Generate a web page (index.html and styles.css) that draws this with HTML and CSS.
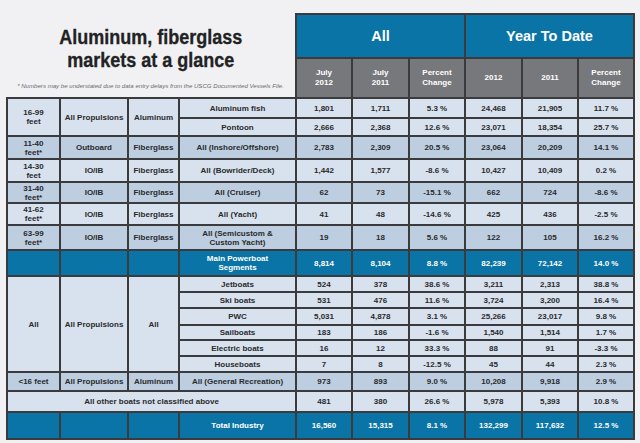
FILE: index.html
```html
<!DOCTYPE html>
<html>
<head>
<meta charset="utf-8">
<link rel="stylesheet" href="styles.css">
</head>
<body>
<div class="grid">
  <div class="title">
    <div class="title-text">Aluminum, fiberglass<br>markets at a glance</div>
    <div class="note">* Numbers may be understated due to data entry delays from the USCG Documented Vessels File.</div>
  </div>
  <div class="c bl hd s3">All</div>
  <div class="c bl hd s3">Year To Date</div>
  <div class="c gr">July<br>2012</div>
  <div class="c gr">July<br>2011</div>
  <div class="c gr">Percent<br>Change</div>
  <div class="c gr">2012</div>
  <div class="c gr">2011</div>
  <div class="c gr">Percent<br>Change</div>

  <div class="c lt r2">16-99<br>feet</div>
  <div class="c lt r2">All Propulsions</div>
  <div class="c lt r2">Aluminum</div>
  <div class="c lt">Aluminum fish</div>
  <div class="c lt">1,801</div><div class="c lt">1,711</div><div class="c lt">5.3 %</div><div class="c lt">24,468</div><div class="c lt">21,905</div><div class="c lt">11.7 %</div>
  <div class="c lt">Pontoon</div>
  <div class="c lt">2,666</div><div class="c lt">2,368</div><div class="c lt">12.6 %</div><div class="c lt">23,071</div><div class="c lt">18,354</div><div class="c lt">25.7 %</div>

  <div class="c dk">11-40<br>feet*</div><div class="c dk">Outboard</div><div class="c dk">Fiberglass</div><div class="c dk">All (Inshore/Offshore)</div>
  <div class="c dk">2,783</div><div class="c dk">2,309</div><div class="c dk">20.5 %</div><div class="c dk">23,064</div><div class="c dk">20,209</div><div class="c dk">14.1 %</div>

  <div class="c lt">14-30<br>feet</div><div class="c lt">IO/IB</div><div class="c lt">Fiberglass</div><div class="c lt">All (Bowrider/Deck)</div>
  <div class="c lt">1,442</div><div class="c lt">1,577</div><div class="c lt">-8.6 %</div><div class="c lt">10,427</div><div class="c lt">10,409</div><div class="c lt">0.2 %</div>

  <div class="c dk">31-40<br>feet*</div><div class="c dk">IO/IB</div><div class="c dk">Fiberglass</div><div class="c dk">All (Cruiser)</div>
  <div class="c dk">62</div><div class="c dk">73</div><div class="c dk">-15.1 %</div><div class="c dk">662</div><div class="c dk">724</div><div class="c dk">-8.6 %</div>

  <div class="c lt">41-62<br>feet*</div><div class="c lt">IO/IB</div><div class="c lt">Fiberglass</div><div class="c lt">All (Yacht)</div>
  <div class="c lt">41</div><div class="c lt">48</div><div class="c lt">-14.6 %</div><div class="c lt">425</div><div class="c lt">436</div><div class="c lt">-2.5 %</div>

  <div class="c dk">63-99<br>feet*</div><div class="c dk">IO/IB</div><div class="c dk">Fiberglass</div><div class="c dk">All (Semicustom &amp;<br>Custom Yacht)</div>
  <div class="c dk">19</div><div class="c dk">18</div><div class="c dk">5.6 %</div><div class="c dk">122</div><div class="c dk">105</div><div class="c dk">16.2 %</div>

  <div class="c bl"></div><div class="c bl"></div><div class="c bl"></div><div class="c bl">Main Powerboat<br>Segments</div>
  <div class="c bl">8,814</div><div class="c bl">8,104</div><div class="c bl">8.8 %</div><div class="c bl">82,239</div><div class="c bl">72,142</div><div class="c bl">14.0 %</div>

  <div class="c lt r6">All</div><div class="c lt r6">All Propulsions</div><div class="c lt r6">All</div>
  <div class="c lt">Jetboats</div>
  <div class="c lt">524</div><div class="c lt">378</div><div class="c lt">38.6 %</div><div class="c lt">3,211</div><div class="c lt">2,313</div><div class="c lt">38.8 %</div>
  <div class="c lt">Ski boats</div>
  <div class="c lt">531</div><div class="c lt">476</div><div class="c lt">11.6 %</div><div class="c lt">3,724</div><div class="c lt">3,200</div><div class="c lt">16.4 %</div>
  <div class="c lt">PWC</div>
  <div class="c lt">5,031</div><div class="c lt">4,878</div><div class="c lt">3.1 %</div><div class="c lt">25,266</div><div class="c lt">23,017</div><div class="c lt">9.8 %</div>
  <div class="c lt">Sailboats</div>
  <div class="c lt">183</div><div class="c lt">186</div><div class="c lt">-1.6 %</div><div class="c lt">1,540</div><div class="c lt">1,514</div><div class="c lt">1.7 %</div>
  <div class="c lt">Electric boats</div>
  <div class="c lt">16</div><div class="c lt">12</div><div class="c lt">33.3 %</div><div class="c lt">88</div><div class="c lt">91</div><div class="c lt">-3.3 %</div>
  <div class="c lt">Houseboats</div>
  <div class="c lt">7</div><div class="c lt">8</div><div class="c lt">-12.5 %</div><div class="c lt">45</div><div class="c lt">44</div><div class="c lt">2.3 %</div>

  <div class="c dk">&lt;16 feet</div><div class="c dk">All Propulsions</div><div class="c dk">Aluminum</div><div class="c dk">All (General Recreation)</div>
  <div class="c dk">973</div><div class="c dk">893</div><div class="c dk">9.0 %</div><div class="c dk">10,208</div><div class="c dk">9,918</div><div class="c dk">2.9 %</div>

  <div class="c lt s4">All other boats not classified above</div>
  <div class="c lt">481</div><div class="c lt">380</div><div class="c lt">26.6 %</div><div class="c lt">5,978</div><div class="c lt">5,393</div><div class="c lt">10.8 %</div>

  <div class="c bl"></div><div class="c bl"></div><div class="c bl"></div><div class="c bl">Total Industry</div>
  <div class="c bl">16,560</div><div class="c bl">15,315</div><div class="c bl">8.1 %</div><div class="c bl">132,299</div><div class="c bl">117,632</div><div class="c bl">12.5 %</div>
</div>
</body>
</html>
```
FILE: styles.css
```css
html, body {
  margin: 0;
  padding: 0;
  background: #f1f1f3;
}
body {
  width: 640px;
  height: 443px;
  overflow: hidden;
  padding-top: 13px;
  box-sizing: border-box;
  font-family: "Liberation Sans", Arial, sans-serif;
}
.grid {
  margin-left: 6px;
  width: 629px;
  box-sizing: border-box;
  padding: 2px;
  background: #3b3b3d;
  display: grid;
  gap: 2px;
  grid-template-columns: 51px 66px 49px 115px 54px 55px 54px 55px 54px 54px;
  grid-template-rows: 42px 38px 18px 16px 21px 21px 19px 20px 23px 24px 14px 14px 15px 13px 14px 14px 17px 19px 25px;
}
.title {
  grid-column: span 4;
  grid-row: span 2;
  margin: -2px 0 0 -2px;
  background: #f1f1f3;
  display: flex;
  flex-direction: column;
  align-items: center;
  padding-top: 13px;
}
.title-text {
  font-family: "Liberation Sans", Arial, sans-serif;
  font-weight: bold;
  font-size: 20px;
  line-height: 23px;
  color: #222;
  text-align: center;
  white-space: nowrap;
  transform: scaleX(0.9);
  -webkit-text-stroke: 0.3px #222;
}
.note {
  margin-top: 10px;
  font-size: 6.1px;
  line-height: 8px;
  font-style: italic;
  color: #6a6a6e;
  white-space: nowrap;
}
.c {
  display: flex;
  align-items: center;
  justify-content: center;
  text-align: center;
  font-size: 8px;
  line-height: 9px;
  font-weight: bold;
  color: #2a2a2c;
}
.lt { background: #d8e2ee; }
.dk { background: #bdcee1; }
.bl { background: #0a74a6; color: #fff; }
.gr { background: #77787b; color: #fff; line-height: 10px; }
.hd { font-size: 14.5px; line-height: 16px; }
.s3 { grid-column: span 3; }
.s4 { grid-column: span 4; }
.r2 { grid-row: span 2; }
.r6 { grid-row: span 6; }
```
